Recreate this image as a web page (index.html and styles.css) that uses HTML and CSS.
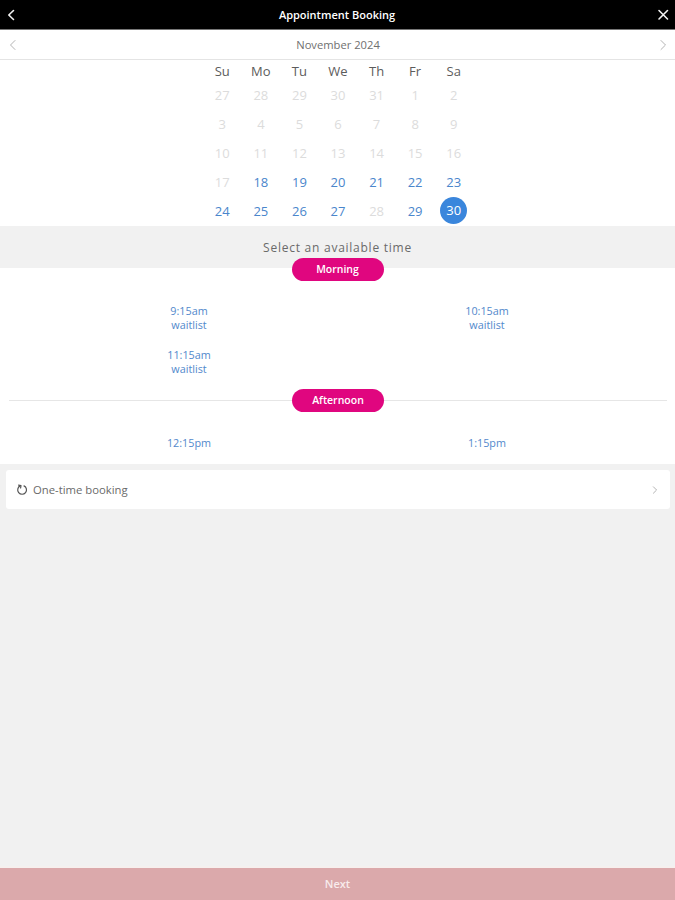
FILE: index.html
```html
<!DOCTYPE html>
<html lang="en">
<head>
    <meta charset="UTF-8">
    <meta name="viewport" content="width=device-width, initial-scale=1.0">
    <title>Appointment Booking</title>
    <link rel="stylesheet" href="styles.css">
</head>
<body>
    <header class="topbar">
        <svg class="topbar-icon" viewBox="0 0 12 14"><path d="M8.5 2.5 L3.8 7 L8.5 11.5"/></svg>
        <h1>Appointment Booking</h1>
        <svg class="topbar-icon" viewBox="0 0 12 14"><path d="M2 2.5 L10.5 11 M10.5 2.5 L2 11"/></svg>
    </header>

    <div class="month-bar">
        <svg class="month-arrow" viewBox="0 0 10 12"><path d="M7 1.5 L2.5 6 L7 10.5"/></svg>
        <span>November 2024</span>
        <svg class="month-arrow" viewBox="0 0 10 12"><path d="M3 1.5 L7.5 6 L3 10.5"/></svg>
    </div>

    <section class="calendar">
        <div class="weekdays">
            <span>Su</span><span>Mo</span><span>Tu</span><span>We</span><span>Th</span><span>Fr</span><span>Sa</span>
        </div>
        <div class="days">
            <span>27</span><span>28</span><span>29</span><span>30</span><span>31</span><span>1</span><span>2</span>
            <span>3</span><span>4</span><span>5</span><span>6</span><span>7</span><span>8</span><span>9</span>
            <span>10</span><span>11</span><span>12</span><span>13</span><span>14</span><span>15</span><span>16</span>
            <span>17</span><span class="open">18</span><span class="open">19</span><span class="open">20</span><span class="open">21</span><span class="open">22</span><span class="open">23</span>
            <span class="open">24</span><span class="open">25</span><span class="open">26</span><span class="open">27</span><span>28</span><span class="open">29</span><span class="selected">30</span>
        </div>
    </section>

    <div class="time-title">Select an available time</div>

    <section class="times">
        <div class="period period-first"><span class="pill">Morning</span></div>
        <div class="slots slots-morning">
            <a class="slot">9:15am<small>waitlist</small></a>
            <a class="slot">10:15am<small>waitlist</small></a>
            <a class="slot">11:15am<small>waitlist</small></a>
        </div>
        <div class="period period-line"><span class="pill">Afternoon</span></div>
        <div class="slots slots-afternoon">
            <a class="slot">12:15pm</a>
            <a class="slot">1:15pm</a>
        </div>
    </section>

    <main class="content">
        <div class="option-card">
            <svg class="repeat-icon" viewBox="0 0 12 12"><path d="M4.2 1.9 A4.4 4.4 0 1 0 8 1.9"/><path d="M2.6 1.2 L5 1.6 L4.6 4"/></svg>
            <span>One-time booking</span>
            <svg class="card-arrow" viewBox="0 0 8 10"><path d="M2.4 1.8 L5.6 5 L2.4 8.2"/></svg>
        </div>
    </main>

    <footer class="next-bar">Next</footer>
</body>
</html>
```

FILE: styles.css
```css
* {
    margin: 0;
    padding: 0;
    box-sizing: border-box;
    font-family: 'Open Sans', sans-serif;
}

body {
    width: 675px;
    height: 900px;
    overflow: hidden;
    background-color: #f1f1f1;
    display: flex;
    flex-direction: column;
}

svg {
    fill: none;
    stroke-linecap: round;
    stroke-linejoin: round;
}

/* Header */
.topbar {
    height: 30px;
    background: #000;
    border-bottom: 1px solid #777;
    color: #fff;
    display: flex;
    align-items: center;
    justify-content: space-between;
    padding: 0 6px 0 5px;
}

.topbar h1 {
    font-size: 11px;
    font-weight: 600;
}

.topbar-icon {
    width: 12px;
    height: 14px;
    stroke: #f2f2f2;
    stroke-width: 1.6;
}

.month-bar {
    height: 30px;
    background: #fff;
    border-bottom: 1px solid #e4e4e4;
    color: #707070;
    font-size: 11.2px;
    display: flex;
    align-items: center;
    justify-content: space-between;
    padding: 0 7px 0 8px;
}

.month-arrow {
    width: 10px;
    height: 12px;
    stroke: #b4b4b4;
    stroke-width: 1;
}

/* Calendar */
.calendar {
    height: 166px;
    background: #fff;
}

.weekdays,
.days {
    width: 270px;
    margin-left: 203px;
    display: grid;
    grid-template-columns: repeat(7, 1fr);
    text-align: center;
}

.weekdays {
    height: 20px;
    margin-top: 1px;
    align-items: center;
    color: #5c5c5c;
    font-size: 13px;
}

.days {
    margin-top: -1px;
    grid-auto-rows: 29px;
    align-items: center;
    justify-items: center;
    color: #dcdcdc;
    font-size: 13px;
}

.days .open {
    color: #4a86cc;
}

.days .selected {
    width: 27px;
    height: 27px;
    line-height: 27px;
    border-radius: 50%;
    background: #3a86dc;
    color: #fff;
}

.time-title {
    height: 42px;
    padding-top: 13px;
    background: #f1f1f1;
    color: #6a6a6a;
    font-size: 12px;
    letter-spacing: 0.75px;
    text-align: center;
}

/* Time slots */
.times {
    height: 196px;
    background: #fff;
}

.period {
    display: flex;
    justify-content: center;
    position: relative;
}

.period-first {
    margin-top: -10px;
}

.period-line {
    margin: 0 8px 0 9px;
}

.period-line::before {
    content: "";
    position: absolute;
    left: 0;
    right: 0;
    top: 11px;
    border-top: 1px solid #e6e6e6;
}

.pill {
    width: 92px;
    height: 23px;
    line-height: 22px;
    border-radius: 12px;
    background: #e0067f;
    color: #fff;
    font-size: 10.5px;
    font-weight: 600;
    text-align: center;
    position: relative;
}

.slots {
    padding: 0 39px 0 40px;
    display: grid;
    grid-template-columns: 1fr 1fr;
    text-align: center;
}

.slots-morning {
    padding-top: 23px;
    grid-auto-rows: 44px;
    height: 108px;
}

.slots-afternoon {
    padding-top: 24px;
}

.slot {
    color: #5289cc;
    font-size: 10.8px;
    line-height: 14px;
}

.slot small {
    display: block;
    font-size: 10.8px;
}

/* Booking type */
.content {
    flex: 1;
    padding: 6px 5px 0 6px;
}

.option-card {
    height: 39px;
    background: #fff;
    border-radius: 3px;
    color: #6a6a6a;
    font-size: 11.3px;
    display: flex;
    align-items: center;
    gap: 5px;
    padding: 0 11px 0 10px;
}

.option-card span {
    flex: 1;
}

.repeat-icon {
    width: 12px;
    height: 12px;
    stroke: #555;
    stroke-width: 1.2;
}

.card-arrow {
    width: 8px;
    height: 10px;
    stroke: #b4b4b4;
    stroke-width: 1;
}

.next-bar {
    height: 34px;
    background: #dba9ab;
    border-top: 2px solid #f6f0ee;
    color: #f8ecec;
    font-size: 11px;
    font-weight: 600;
    text-align: center;
    line-height: 32px;
}
```
